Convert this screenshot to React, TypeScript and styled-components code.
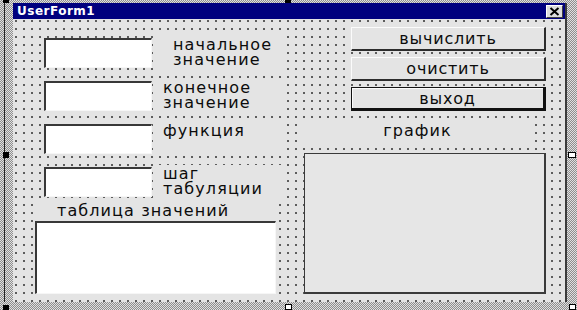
import styled, { createGlobalStyle, css } from 'styled-components'

const GlobalStyle = createGlobalStyle`
  html, body {
    margin: 0;
    padding: 0;
  }
  body {
    width: 577px;
    height: 310px;
    overflow: hidden;
    font-family: "DejaVu Sans", "Liberation Sans", sans-serif;
    color: #0c0c0c;
  }
`

const formGrey = '#e4e4e4'

const Stage = styled.div`
  position: relative;
  width: 577px;
  height: 310px;
  box-sizing: border-box;
  padding: 0 10px 8px 4px;
  display: flex;
  background-color: #e0e0e0;
  background-image: repeating-conic-gradient(#8e8e8e 0 25%, transparent 0 50%);
  background-size: 2px 2px;
`

const Selection = styled.div`
  flex: 1;
  display: flex;
  border-left: 1px solid #222;
  padding: 3px 0 0 8px;
`

const Form = styled.div`
  flex: 1;
  display: flex;
  flex-direction: column;
  border-right: 2px solid #3a3a3a;
`

const TitleBar = styled.div`
  height: 16px;
  display: flex;
  align-items: center;
  justify-content: space-between;
  padding: 0 2px 0 4px;
  background: #00007e;
  color: #fff;
  font-size: 12px;
  font-weight: bold;
  letter-spacing: 0.5px;
`

const CloseBox = styled.div`
  width: 17px;
  height: 13px;
  box-sizing: border-box;
  display: flex;
  align-items: center;
  justify-content: center;
  background: #dcdcdc;
  border-style: solid;
  border-width: 1px;
  border-color: #fff #404040 #404040 #fff;
`

const Client = styled.div`
  flex: 1;
  display: flex;
  padding-left: 22px;
  background-color: ${formGrey};
  background-image: radial-gradient(circle, #5a5a5a 0.7px, transparent 1.2px);
  background-size: 8px 8px;
  background-position: -1px -2px;
`

const LeftColumn = styled.div`
  width: 250px;
  display: flex;
  flex-direction: column;
  padding-top: 19px;
`

const FieldRow = styled.div`
  display: flex;
  height: 30px;
  padding-left: 9px;
  margin-bottom: 13px;
`

const TextBox = styled.div`
  width: 108px;
  height: 30px;
  box-sizing: border-box;
  flex: none;
  background: #fff;
  border-style: solid;
  border-width: 2px 1px 1px 2px;
  border-color: #383838 #f6f6f6 #f6f6f6 #383838;
`

const FieldLabel = styled.div<{ $indent: number }>`
  flex: 1;
  box-sizing: border-box;
  margin: -2px 0 0 3px;
  height: 34px;
  padding: 1px 0 0 ${(p) => p.$indent}px;
  background: ${formGrey};
  font-size: 16px;
  line-height: 15px;
  letter-spacing: 1.1px;
`

const TableCaption = styled.div`
  margin-top: -8px;
  height: 19px;
  width: 241px;
  padding-left: 22px;
  box-sizing: border-box;
  background: ${formGrey};
  font-size: 16px;
  line-height: 18px;
  letter-spacing: 1.1px;
`

const ListBox = styled.div`
  width: 241px;
  height: 73px;
  box-sizing: border-box;
  background: #fff;
  border-style: solid;
  border-width: 2px 1px 1px 2px;
  border-color: #383838 #f6f6f6 #f6f6f6 #383838;
`

const RightColumn = styled.div`
  width: 246px;
  margin-left: 15px;
  display: flex;
  flex-direction: column;
`

const ButtonStack = styled.div`
  display: flex;
  flex-direction: column;
  gap: 6px;
  padding: 8px 0 0 51px;
`

const CommandButton = styled.div<{ $default?: boolean }>`
  width: 195px;
  height: 24px;
  box-sizing: border-box;
  display: flex;
  align-items: center;
  justify-content: center;
  background: ${formGrey};
  border-style: solid;
  border-width: 1px 2px 2px 1px;
  border-color: #fbfbfb #2c2c2c #2c2c2c #fbfbfb;
  font-size: 16px;
  letter-spacing: 0.8px;
  ${(p) =>
    p.$default &&
    css`
      border-color: #111;
      border-width: 1px 3px 3px 1px;
      box-shadow: inset 1px 1px 0 #fbfbfb;
    `}
`

const GraphCaption = styled.div`
  margin-top: 9px;
  width: 235px;
  height: 22px;
  background: ${formGrey};
  text-align: center;
  font-size: 16px;
  line-height: 22px;
  letter-spacing: 1.1px;
`

const GraphBox = styled.div`
  margin: 11px 0 0 4px;
  width: 242px;
  height: 141px;
  box-sizing: border-box;
  background: #e6e6e6;
  border-style: solid;
  border-width: 1px 2px 2px 1px;
  border-color: #3a3a3a;
`

const Handle = styled.div<{ $x: number; $y: number; $w: number; $h: number; $open?: boolean }>`
  position: absolute;
  left: ${(p) => p.$x}px;
  top: ${(p) => p.$y}px;
  width: ${(p) => p.$w}px;
  height: ${(p) => p.$h}px;
  box-sizing: border-box;
  background: ${(p) => (p.$open ? '#fff' : '#000')};
  border: 1px solid #000;
`

const fields = [
  { lines: ['начальное', 'значение'], indent: 18 },
  { lines: ['конечное', 'значение'], indent: 8 },
  { lines: ['функция'], indent: 8 },
  { lines: ['шаг', 'табуляции'], indent: 8 },
]

const handles = [
  { x: 3, y: 0, w: 6, h: 3 },
  { x: 285, y: 0, w: 6, h: 3 },
  { x: 3, y: 152, w: 6, h: 6 },
  { x: 568, y: 152, w: 8, h: 6, open: true },
  { x: 3, y: 305, w: 6, h: 5 },
  { x: 285, y: 304, w: 7, h: 6, open: true },
  { x: 569, y: 304, w: 7, h: 6, open: true },
]

export default function App() {
  return (
    <>
      <GlobalStyle />
      <Stage>
        <Selection>
          <Form>
            <TitleBar>
              <span>UserForm1</span>
              <CloseBox>
                <svg width="11" height="9" viewBox="0 0 11 9">
                  <path d="M1.5 1 L9.5 8 M9.5 1 L1.5 8" stroke="#000" strokeWidth="2" />
                </svg>
              </CloseBox>
            </TitleBar>
            <Client>
              <LeftColumn>
                {fields.map((f) => (
                  <FieldRow key={f.lines[0]}>
                    <TextBox />
                    <FieldLabel $indent={f.indent}>
                      {f.lines.map((l) => (
                        <div key={l}>{l}</div>
                      ))}
                    </FieldLabel>
                  </FieldRow>
                ))}
                <TableCaption>таблица значений</TableCaption>
                <ListBox />
              </LeftColumn>
              <RightColumn>
                <ButtonStack>
                  <CommandButton>вычислить</CommandButton>
                  <CommandButton>очистить</CommandButton>
                  <CommandButton $default>выход</CommandButton>
                </ButtonStack>
                <GraphCaption>график</GraphCaption>
                <GraphBox />
              </RightColumn>
            </Client>
          </Form>
        </Selection>
        {handles.map((h, i) => (
          <Handle key={i} $x={h.x} $y={h.y} $w={h.w} $h={h.h} $open={h.open} />
        ))}
      </Stage>
    </>
  )
}
